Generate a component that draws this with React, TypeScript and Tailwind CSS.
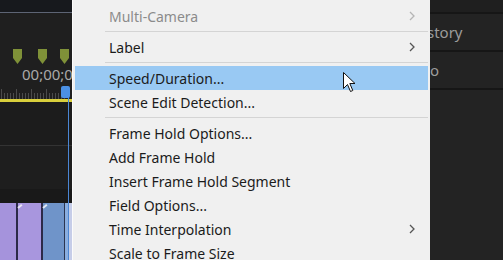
const menuFont = { fontFamily: '"Noto Sans", "Open Sans", sans-serif' };

type Item = { label: string; disabled?: boolean; sub?: boolean; active?: boolean } | "sep";

const items: Item[] = [
  { label: "Multi-Camera", disabled: true, sub: true },
  "sep",
  { label: "Label", sub: true },
  "sep",
  { label: "Speed/Duration...", active: true },
  { label: "Scene Edit Detection..." },
  "sep",
  { label: "Frame Hold Options..." },
  { label: "Add Frame Hold" },
  { label: "Insert Frame Hold Segment" },
  { label: "Field Options..." },
  { label: "Time Interpolation", sub: true },
  { label: "Scale to Frame Size" },
];

function Chevron({ color }: { color: string }) {
  return (
    <svg width="6" height="10" viewBox="0 0 6 10" className="mr-[13px]">
      <polyline points="1,1 5,5 1,9" fill="none" stroke={color} strokeWidth="1.3" />
    </svg>
  );
}

function Marker() {
  return (
    <svg width="9" height="15" viewBox="0 0 9 15">
      <polygon points="0,0 9,0 9,9 4.5,15 0,9" fill="#7f9138" />
    </svg>
  );
}

function Timeline() {
  const ticks = Array.from({ length: 22 });
  return (
    <div className="relative w-[72px] h-full flex flex-col bg-[#1f1f1f] overflow-hidden">
      <div className="h-[12px] bg-[#17191d]" />
      <div className="h-px bg-[#5d6474]" />
      <div className="h-[36px]" />
      <div className="h-[15px] flex">
        <div className="ml-[13px]"><Marker /></div>
        <div className="ml-[16px]"><Marker /></div>
        <div className="ml-[13px]"><Marker /></div>
      </div>
      <div className="h-[21px] pl-[22px] flex items-center text-[15px] leading-none text-[#a9a9a9] whitespace-nowrap" style={{ fontFamily: '"Noto Sans", sans-serif' }}>
        00;00;04
      </div>
      <div className="h-[14px] flex items-end gap-[2px] pl-[1px]">
        {ticks.map((_, i) => (
          <div key={i} className={`w-px bg-[#4b4b4b] ${i % 5 === 0 ? "h-[10px]" : "h-[6px]"}`} />
        ))}
      </div>
      <div className="h-[3px] bg-[#d9cf3c]" />
      <div className="h-[43px] bg-[#1c1c1c]" />
      <div className="h-px bg-[#333]" />
      <div className="h-[43px] bg-[#1e1e1e]" />
      <div className="h-[14px] bg-[#191919]" />
      <div className="flex-1 flex">
        <div className="w-[16px] bg-[#a593dc]" />
        <div className="w-[2px] bg-[#2c2a48]" />
        <div className="w-[23px] bg-[#a896de] relative">
          <div className="absolute left-0 top-0 w-[5px] h-[2px] bg-[#e8e4f5] rotate-[-40deg] origin-left translate-y-[4px]" />
        </div>
        <div className="w-[2px] bg-[#2c2a48]" />
        <div className="w-[21px] bg-[#6f94c9] relative">
          <div className="absolute left-0 top-0 w-[5px] h-[2px] bg-[#e0e8f5] rotate-[-40deg] origin-left translate-y-[4px]" />
        </div>
        <div className="w-[1px] bg-[#2a3450]" />
        <div className="w-[3px] bg-[#8aaee0]" />
        <div className="flex-1 bg-[#c6cde8]" />
      </div>
      <div className="absolute left-[68px] top-[97px] bottom-0 w-px bg-[#4a86d4]" />
      <div className="absolute left-[61px] top-[86px] w-[9px] h-[12px] rounded-[2px] bg-[#4b90e4]" />
    </div>
  );
}

function Menu() {
  return (
    <div className="relative w-[358px] h-full bg-[#f0f0f0] border-l border-[#fbfbfb] pt-[4px] text-[14px]" style={menuFont}>
      {items.map((it, i) =>
        it === "sep" ? (
          <div key={i} className="h-[7px] flex items-center pl-[32px] pr-[2px]">
            <div className="h-px w-full bg-[#d4d4d4]" />
          </div>
        ) : (
          <div
            key={i}
            className={`h-[24px] mx-[2px] pl-[34px] flex items-center justify-between ${
              it.active ? "bg-[#99c9f3]" : ""
            } ${it.disabled ? "text-[#8b8b8b]" : "text-[#1b1b1b]"}`}
          >
            <span>{it.label}</span>
            {it.sub && <Chevron color={it.disabled ? "#b5b5b5" : "#555"} />}
          </div>
        )
      )}
      <svg className="absolute left-[270px] top-[72px]" width="13" height="21" viewBox="0 0 13 21">
        <path d="M0.5 0.5 L0.5 16.5 L4.5 12.5 L7.5 19.5 L9.8 18.5 L6.8 11.5 L12 11.5 Z" fill="#fff" stroke="#111" strokeWidth="1" strokeLinejoin="round" />
      </svg>
    </div>
  );
}

function SidePanel() {
  return (
    <div className="flex-1 h-full flex flex-col bg-[#232323] text-[15px] text-[#9c9c9c]" style={{ fontFamily: '"Noto Sans", sans-serif' }}>
      <div className="h-[12px] bg-[#1f1f1f]" />
      <div className="h-[2px] bg-[#161616]" />
      <div className="h-[36px] flex items-center -ml-[3px]">story</div>
      <div className="h-[2px] bg-[#161616]" />
      <div className="h-[36px] flex items-center">o</div>
      <div className="h-[2px] bg-[#161616]" />
      <div className="flex-1" />
    </div>
  );
}

export default function App() {
  return (
    <div className="w-[503px] h-[260px] flex overflow-hidden bg-[#1f1f1f]">
      <Timeline />
      <Menu />
      <SidePanel />
    </div>
  );
}
